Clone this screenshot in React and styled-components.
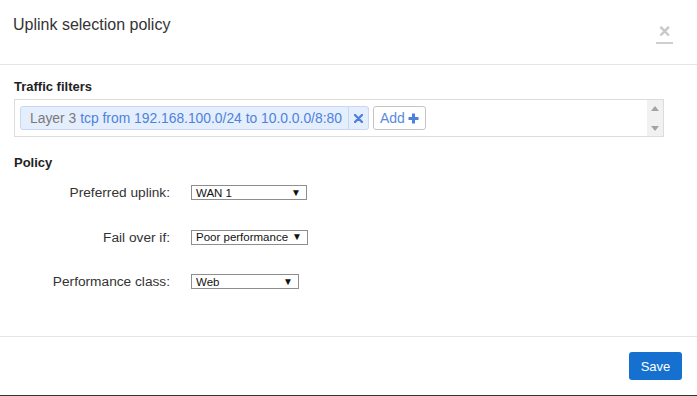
import React from "react";
import styled, { createGlobalStyle } from "styled-components";

const Global = createGlobalStyle`
  html, body { margin: 0; padding: 0; background: #fff; }
  body { font-family: "Liberation Sans", Arial, sans-serif; color: #333; }
  * { box-sizing: border-box; }
`;

const Modal = styled.div`
  width: 697px;
  height: 396px;
  background: #fff;
  display: flex;
  flex-direction: column;
  border-bottom: 1px solid #333;
`;

const Header = styled.div`
  height: 65px;
  flex: none;
  border-bottom: 1px solid #e5e5e5;
  display: flex;
  align-items: flex-start;
  justify-content: space-between;
  padding: 15px 24px 0 13px;
`;

const Title = styled.h1`
  margin: 0;
  font-size: 16px;
  font-weight: normal;
  line-height: 20px;
  color: #333;
`;

const Close = styled.div`
  display: flex;
  flex-direction: column;
  align-items: center;
  margin-top: 7px;
  color: #c8c8c8;
  font-weight: bold;
  font-size: 20px;
  line-height: 18px;
`;

const CloseLine = styled.span`
  width: 17px;
  height: 2px;
  background: #cfcfcf;
  margin-top: 2px;
`;

const Body = styled.div`
  flex: 1;
  padding: 14px 14px 0 14px;
  display: flex;
  flex-direction: column;
`;

const SectionTitle = styled.div`
  font-size: 13px;
  font-weight: bold;
  line-height: 16px;
  color: #222;
  margin-top: ${(p) => p.$mt || 0}px;
`;

const FilterBox = styled.div`
  margin-top: 4px;
  width: 650px;
  height: 38px;
  border: 1px solid #dcdcdc;
  display: flex;
  align-items: stretch;
`;

const Tags = styled.div`
  flex: 1;
  display: flex;
  align-items: flex-start;
  gap: 4px;
  padding: 6px 5px;
`;

const Tag = styled.div`
  height: 24px;
  display: flex;
  align-items: stretch;
  background: #e5eefd;
  border: 1px solid #c6d8f6;
  border-radius: 3px;
  font-size: 13.85px;
`;

const TagText = styled.span`
  display: flex;
  align-items: center;
  padding: 0 6px 0 9px;
  color: #4d82dc;
  white-space: nowrap;
`;

const Muted = styled.span`
  color: #7a7a7a;
  margin-right: 4px;
`;

const TagRemove = styled.span`
  display: flex;
  align-items: center;
  justify-content: center;
  width: 20px;
  border-left: 1px solid #c6d8f6;
  color: #4d82dc;
`;

const AddButton = styled.div`
  height: 24px;
  display: flex;
  align-items: center;
  gap: 3px;
  padding: 0 6px;
  background: #fff;
  border: 1px solid #c4c4c4;
  border-radius: 3px;
  color: #5a8ae0;
  font-size: 14px;
`;

const Scroll = styled.div`
  width: 16px;
  background: #f1f1f1;
  display: flex;
  flex-direction: column;
  align-items: center;
  justify-content: space-between;
  padding: 6px 0 5px;
`;

const Form = styled.div`
  margin-top: 14px;
  display: grid;
  grid-template-columns: 156px auto;
  column-gap: 21px;
  row-gap: 29.5px;
  align-items: center;
  justify-items: start;
`;

const Label = styled.div`
  justify-self: end;
  font-size: 13.7px;
  color: #333;
  line-height: 15px;
`;

const Select = styled.div`
  width: ${(p) => p.$w}px;
  height: 15px;
  border: 1px solid #8e8e8e;
  display: flex;
  align-items: center;
  justify-content: space-between;
  padding: 0 5px 0 4px;
  font-size: 11.5px;
  color: #111;
  background: #fff;
`;

const Arrow = styled.span`
  font-size: 10px;
  line-height: 10px;
  color: #111;
`;

const Footer = styled.div`
  height: 59px;
  flex: none;
  border-top: 1px solid #e5e5e5;
  display: flex;
  justify-content: flex-end;
  align-items: flex-start;
  padding: 15px 15px 0 0;
`;

const SaveButton = styled.button`
  width: 53px;
  height: 28px;
  border: none;
  border-radius: 3px;
  background: #1570d0;
  color: #fff;
  font-family: "Liberation Sans", Arial, sans-serif;
  font-size: 13px;
  padding: 0;
`;

const Tri = ({ up }) => (
  <svg width="8" height="5" viewBox="0 0 8 5">
    <path d={up ? "M0 5 L4 0 L8 5 Z" : "M0 0 L4 5 L8 0 Z"} fill="#a3a3a3" />
  </svg>
);

const rows = [
  { label: "Preferred uplink:", value: "WAN 1", w: 116 },
  { label: "Fail over if:", value: "Poor performance", w: 117 },
  { label: "Performance class:", value: "Web", w: 108 },
];

export default function App() {
  return (
    <>
      <Global />
      <Modal>
        <Header>
          <Title>Uplink selection policy</Title>
          <Close>
            ×<CloseLine />
          </Close>
        </Header>
        <Body>
          <SectionTitle>Traffic filters</SectionTitle>
          <FilterBox>
            <Tags>
              <Tag>
                <TagText>
                  <Muted>Layer 3</Muted>tcp from 192.168.100.0/24 to 10.0.0.0/8:80
                </TagText>
                <TagRemove>
                  <svg width="9" height="9" viewBox="0 0 9 9">
                    <path d="M1 1 L8 8 M8 1 L1 8" stroke="#4d82dc" strokeWidth="2.4" strokeLinecap="round" />
                  </svg>
                </TagRemove>
              </Tag>
              <AddButton>
                Add
                <svg width="11" height="11" viewBox="0 0 11 11">
                  <path d="M5.5 0.5 V10.5 M0.5 5.5 H10.5" stroke="#4d82dc" strokeWidth="3" />
                </svg>
              </AddButton>
            </Tags>
            <Scroll>
              <Tri up />
              <Tri />
            </Scroll>
          </FilterBox>
          <SectionTitle $mt={18}>Policy</SectionTitle>
          <Form>
            {rows.map((r) => (
              <React.Fragment key={r.label}>
                <Label>{r.label}</Label>
                <Select $w={r.w}>
                  <span>{r.value}</span>
                  <Arrow>▼</Arrow>
                </Select>
              </React.Fragment>
            ))}
          </Form>
        </Body>
        <Footer>
          <SaveButton>Save</SaveButton>
        </Footer>
      </Modal>
    </>
  );
}
